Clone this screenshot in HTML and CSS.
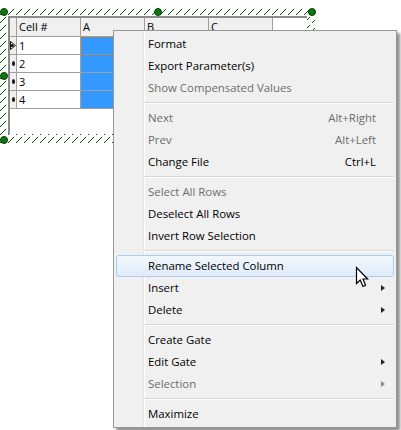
FILE: index.html
```html
<!DOCTYPE html>
<html lang="en">
<head>
  <meta charset="UTF-8">
  <title>Cell table menu</title>
  <link rel="stylesheet" href="styles.css">
</head>
<body>

  <div class="frame">
    <svg class="hatch" width="315" height="135">
      <defs>
        <pattern id="hatch-lines" width="8" height="8" patternUnits="userSpaceOnUse">
          <path d="M0 7 L6 1" stroke="#005f00" stroke-width="1"/>
        </pattern>
      </defs>
      <rect width="315" height="135" fill="url(#hatch-lines)"/>
    </svg>
    <span class="handle h-tl"></span>
    <span class="handle h-tm"></span>
    <span class="handle h-tr"></span>
    <span class="handle h-ml"></span>
    <span class="handle h-bl"></span>

    <div class="grid">
      <div class="row head">
        <div class="marker"></div>
        <div class="cell c-id">Cell #</div>
        <div class="cell c-col">A</div>
        <div class="cell c-col">B</div>
        <div class="cell c-col">C</div>
      </div>
      <div class="row">
        <div class="marker">
          <svg class="arrow" width="6" height="9" viewBox="0 0 6 9">
            <path d="M0.5 0.5 L5.5 4.5 L0.5 8.5 Z" fill="#fff" stroke="#111" stroke-width="1"/>
            <circle cx="2.2" cy="4.5" r="1.5" fill="#111"/>
          </svg>
        </div>
        <div class="cell c-id">1</div>
        <div class="cell c-col sel focus"></div>
      </div>
      <div class="row">
        <div class="marker"><span class="dot"></span></div>
        <div class="cell c-id">2</div>
        <div class="cell c-col sel"></div>
      </div>
      <div class="row">
        <div class="marker"><span class="dot"></span></div>
        <div class="cell c-id">3</div>
        <div class="cell c-col sel"></div>
      </div>
      <div class="row">
        <div class="marker"><span class="dot"></span></div>
        <div class="cell c-id">4</div>
        <div class="cell c-col sel"></div>
      </div>
    </div>
  </div>

  <div class="menu">
    <div class="item">Format</div>
    <div class="item">Export Parameter(s)</div>
    <div class="item off">Show Compensated Values</div>
    <div class="sep"></div>
    <div class="item off">Next<span class="key">Alt+Right</span></div>
    <div class="item off">Prev<span class="key">Alt+Left</span></div>
    <div class="item">Change File<span class="key">Ctrl+L</span></div>
    <div class="sep"></div>
    <div class="item off">Select All Rows</div>
    <div class="item">Deselect All Rows</div>
    <div class="item">Invert Row Selection</div>
    <div class="sep"></div>
    <div class="item hover">Rename Selected Column</div>
    <div class="item">Insert<span class="sub"></span></div>
    <div class="item">Delete<span class="sub"></span></div>
    <div class="sep"></div>
    <div class="item">Create Gate</div>
    <div class="item">Edit Gate<span class="sub"></span></div>
    <div class="item off">Selection<span class="sub"></span></div>
    <div class="sep"></div>
    <div class="item">Maximize</div>

    <svg class="cursor" width="14" height="23" viewBox="0 0 14 23">
      <path d="M1.5 1.5 V17.5 L5.2 14 L8 20.5 L10.6 19.3 L8 13 H12.6 Z" fill="#fff" stroke="#000" stroke-width="1.2"/>
    </svg>
  </div>

</body>
</html>
```

FILE: styles.css
```css
body {
  margin: 0;
  background: #fff;
  font-family: "Open Sans", "Noto Sans", sans-serif;
  font-size: 11.4px;
  color: #000;
  width: 401px;
  height: 430px;
  overflow: hidden;
  position: relative;
}

/* selection frame round the table */
.frame {
  position: absolute;
  left: 0;
  top: 8px;
  width: 315px;
  height: 135px;
  box-sizing: border-box;
  padding: 8px 8px 9px 8px;
}

.hatch {
  position: absolute;
  left: 0;
  top: 0;
}

.handle {
  position: absolute;
  width: 6px;
  height: 6px;
  border-radius: 50%;
  background: #0a7a0a;
  border: 1px solid #0b3a0b;
  z-index: 2;
}

.h-tl { left: 0; top: 0; }
.h-tm { left: 154px; top: 0; }
.h-tr { left: 308px; top: 0; }
.h-ml { left: 0; top: 64px; }
.h-bl { left: 0; top: 128px; }

.grid {
  position: relative;
  height: 100%;
  box-sizing: border-box;
  background: #fff;
  border-top: 2px solid #8c8c8c;
  border-left: 2px solid #8c8c8c;
}

.row {
  display: flex;
  height: 18px;
}

.head {
  height: 19px;
}

.head .cell {
  background: #f0f0f0;
  line-height: 18px;
}

.marker {
  width: 7px;
  background: #f0f0f0;
  border-right: 1px solid #a0a0a0;
  border-bottom: 1px solid #a0a0a0;
  box-sizing: border-box;
  position: relative;
  flex: none;
}

.dot {
  position: absolute;
  left: 2px;
  top: 6px;
  width: 3px;
  height: 5px;
  border-radius: 50%;
  background: #111;
}

.arrow {
  position: absolute;
  left: 0;
  top: 4px;
}

.cell {
  box-sizing: border-box;
  border-right: 1px solid #a0a0a0;
  border-bottom: 1px solid #a0a0a0;
  padding-left: 2px;
  font-size: 11px;
  line-height: 17px;
  flex: none;
}

.c-id { width: 64px; }
.c-col { width: 64px; }

.sel { background: #3399ff; }
.focus { outline: 1px dotted #c87a20; outline-offset: -1px; }

/* context menu */
.menu {
  position: absolute;
  left: 113px;
  top: 30px;
  width: 284px;
  box-sizing: border-box;
  padding: 2px;
  background: linear-gradient(to right, #f0f0f0 29px, #e3e3e3 29px, #e3e3e3 30px, #fff 30px, #fff 31px, #f0f0f0 31px);
  border: 1px solid #979797;
  box-shadow: 3px 3px 3px rgba(0, 0, 0, 0.45);
}

.item {
  height: 22px;
  box-sizing: border-box;
  padding: 0 18px 2px 32px;
  display: flex;
  justify-content: space-between;
  align-items: center;
  position: relative;
}

.off { color: #6d6d6d; }

.hover {
  border: 1px solid #aeccec;
  border-radius: 3px;
  padding: 0 17px 1px 31px;
  background: linear-gradient(to bottom, #f3f8fd, #dfeafa);
}

.sub {
  width: 0;
  height: 0;
  border-left: 4px solid #222;
  border-top: 3.5px solid transparent;
  border-bottom: 3.5px solid transparent;
  margin: 2px -9px 0 0;
}

.off .sub { border-left-color: #8a8a8a; }

.sep {
  height: 1px;
  margin: 3px 0 3px 27px;
  background: #d7d7d7;
  border-bottom: 1px solid #fff;
}

.cursor {
  position: absolute;
  left: 241px;
  top: 235px;
}
```
